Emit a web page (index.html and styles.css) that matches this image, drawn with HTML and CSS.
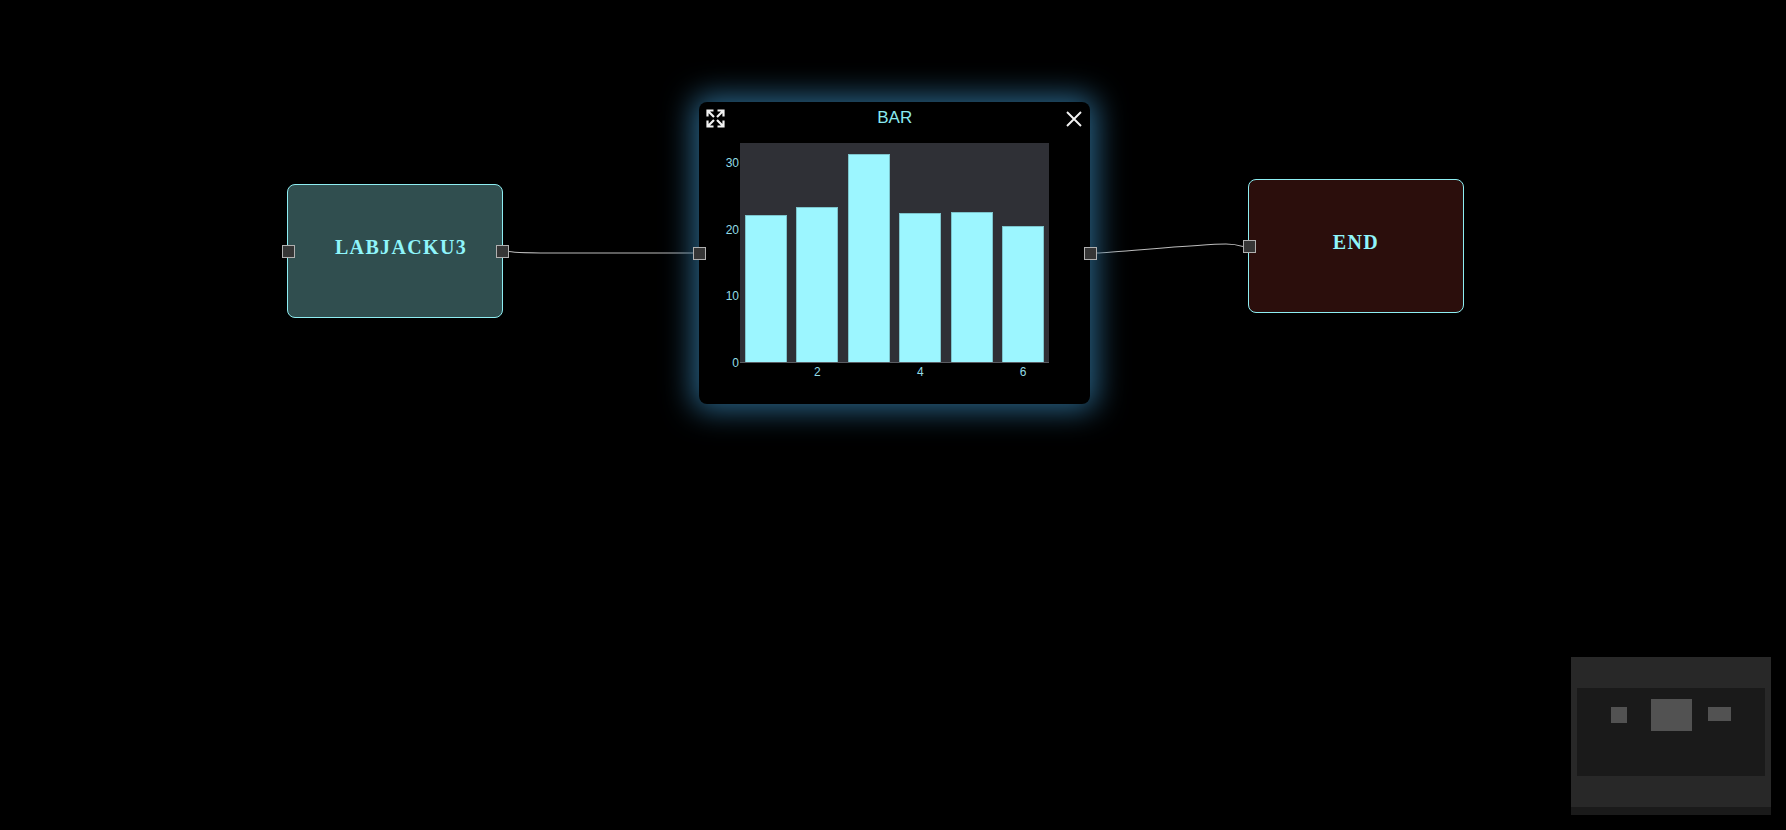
FILE: index.html

```html
<!DOCTYPE html>
<html lang="en">
<head>
  <meta charset="UTF-8" />
  <meta name="viewport" content="width=device-width, initial-scale=1.0" />
  <title>Flow Editor</title>
  <link rel="stylesheet" href="styles.css">
</head>
<body>

<main class="canvas">
  <svg class="wires" width="1786" height="830">
    <path d="M509 251.5 C516 253 530 253 560 253 L693 253" />
    <path d="M1097 253 C1112 253 1198 244 1226 244 C1234 244 1238 245 1243 246.5" />
  </svg>

  <div class="node node-labjack">
    <span class="node-label">LABJACKU3</span>
    <span class="handle handle-left"></span>
    <span class="handle handle-right"></span>
  </div>

  <div class="node node-bar">
    <div class="bar-header">
      <svg class="icon-expand" width="19" height="19" viewBox="0 0 19 19">
        <path d="M1.5 1.5 L8 8 M0.5 1.5 H7.5 M1.5 0.5 V7.5" />
        <path d="M17.5 1.5 L11 8 M18.5 1.5 H11.5 M17.5 0.5 V7.5" />
        <path d="M1.5 17.5 L8 11 M0.5 17.5 H7.5 M1.5 18.5 V11.5" />
        <path d="M17.5 17.5 L11 11 M18.5 17.5 H11.5 M17.5 18.5 V11.5" />
      </svg>
      <span class="bar-title">BAR</span>
      <svg class="icon-close" width="16" height="16" viewBox="0 0 16 16">
        <path d="M1 1 L15 15 M15 1 L1 15" />
      </svg>
    </div>
    <div class="chart">
      <div class="y-axis">
        <span>30</span>
        <span>20</span>
        <span>10</span>
        <span>0</span>
      </div>
      <div class="chart-main">
        <div class="plot bars-row">
          <div class="bar" style="height:147px"></div>
          <div class="bar" style="height:155px"></div>
          <div class="bar" style="height:208px"></div>
          <div class="bar" style="height:149px"></div>
          <div class="bar" style="height:150px"></div>
          <div class="bar" style="height:136px"></div>
        </div>
        <div class="x-axis bars-row">
          <span></span>
          <span>2</span>
          <span></span>
          <span>4</span>
          <span></span>
          <span>6</span>
        </div>
      </div>
    </div>
    <span class="handle handle-left"></span>
    <span class="handle handle-right"></span>
  </div>

  <div class="node node-end">
    <span class="node-label">END</span>
    <span class="handle handle-left"></span>
  </div>

  <div class="minimap">
    <div class="minimap-view"></div>
    <div class="minimap-node mini-labjack"></div>
    <div class="minimap-node mini-bar"></div>
    <div class="minimap-node mini-end"></div>
    <div class="minimap-strip"></div>
  </div>
</main>

</body>
</html>
```

FILE: styles.css

```css
html, body {
  margin: 0;
  padding: 0;
  background: #000;
}
.canvas {
  position: relative;
  width: 1786px;
  height: 830px;
  overflow: hidden;
  background: #000;
}
.wires {
  position: absolute;
  left: 0;
  top: 0;
}
.wires path {
  fill: none;
  stroke: #bcbcbc;
  stroke-width: 1.1;
}

/* nodes */
.node {
  position: absolute;
  box-sizing: border-box;
  display: flex;
  align-items: center;
  justify-content: center;
  border: 1px solid #8eeef2;
  border-radius: 8px;
}
.node-label {
  font-family: "Liberation Serif", serif;
  font-weight: bold;
  font-size: 20px;
  letter-spacing: 1.35px;
  color: #8ff5fb;
  padding-bottom: 8px;
}
.node-labjack {
  left: 287px;
  top: 184px;
  width: 216px;
  height: 134px;
  background: #304e4f;
}
.node-labjack .node-label {
  padding-left: 12px;
}
.node-labjack .handle {
  top: 60px;
}
.node-end {
  left: 1248px;
  top: 179px;
  width: 216px;
  height: 134px;
  background: #2b0e0c;
}
.node-end .handle {
  top: 60px;
}
.handle {
  position: absolute;
  box-sizing: border-box;
  width: 13px;
  height: 13px;
  background: #363636;
  border: 1.5px solid #b0b0b0;
}
.handle-left {
  left: -6px;
}
.handle-right {
  right: -7px;
}

/* bar chart node */
.node-bar {
  left: 699px;
  top: 102px;
  width: 391px;
  height: 302px;
  display: block;
  border: 0;
  background: #000;
  box-shadow: 0 0 30px 6px #2a6488;
}
.node-bar .handle {
  top: 145px;
}
.node-bar .handle-left {
  left: -6.5px;
}
.node-bar .handle-right {
  right: -6.5px;
}
.bar-header {
  display: flex;
  align-items: center;
  justify-content: space-between;
  height: 33px;
  margin-bottom: 8px;
  padding: 0 8.5px 0 7px;
}
.bar-title {
  font-family: "Liberation Sans", sans-serif;
  font-size: 17px;
  line-height: 30px;
  margin-top: -2px;
  margin-left: -1px;
  color: #8aeaf0;
}
.icon-expand path {
  fill: none;
  stroke: #f2f2f2;
  stroke-width: 2.2;
}
.icon-close path {
  fill: none;
  stroke: #f2f2f2;
  stroke-width: 1.9;
}
.chart {
  display: flex;
  font-family: "Liberation Sans", sans-serif;
  font-size: 12px;
  color: #92dce6;
}
.y-axis {
  box-sizing: border-box;
  width: 41px;
  height: 214px;
  margin-top: 13px;
  padding-right: 1px;
  display: flex;
  flex-direction: column;
  justify-content: space-between;
  align-items: flex-end;
  line-height: 14px;
}
.chart-main {
  width: 309px;
}
.bars-row {
  display: flex;
  gap: 9.8px;
  padding: 0 5px;
  box-sizing: border-box;
}
.plot {
  height: 220px;
  align-items: flex-end;
  background: #2f3036;
  border-bottom: 1px solid #5a5c62;
}
.bar {
  flex: 1;
  box-sizing: border-box;
  background: #9cf6ff;
  border: 1px solid #7cc4cc;
  border-bottom: 0;
}
.x-axis {
  margin-top: 2px;
  line-height: 14px;
}
.x-axis span {
  flex: 1;
  text-align: center;
}

/* minimap */
.minimap {
  position: absolute;
  left: 1571px;
  top: 657px;
  width: 200px;
  height: 158px;
  background: #282828;
}
.minimap-view {
  position: absolute;
  left: 6px;
  top: 31px;
  width: 188px;
  height: 88px;
  background: #1a1a1a;
}
.minimap-node {
  position: absolute;
  background: #525252;
}
.mini-labjack {
  left: 40px;
  top: 50px;
  width: 16px;
  height: 16px;
}
.mini-bar {
  left: 80px;
  top: 42px;
  width: 41px;
  height: 32px;
}
.mini-end {
  left: 137px;
  top: 50px;
  width: 23px;
  height: 14px;
}
.minimap-strip {
  position: absolute;
  left: 0;
  right: 0;
  bottom: 0;
  height: 8px;
  background: #1a1a1a;
}
```
